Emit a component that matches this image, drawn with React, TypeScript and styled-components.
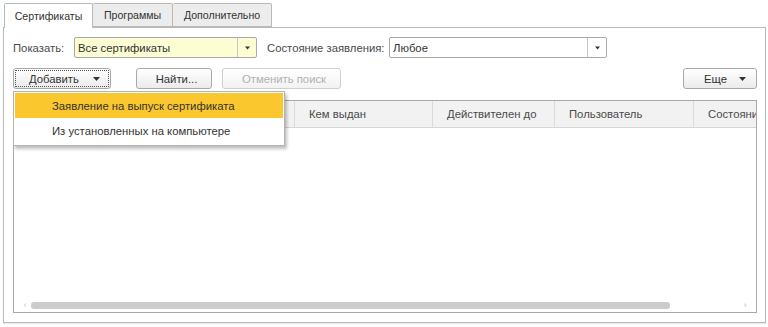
import React from 'react';
import styled, { createGlobalStyle } from 'styled-components';

const GlobalStyle = createGlobalStyle`
  html, body {
    margin: 0;
    padding: 0;
    background: #ffffff;
  }
  body {
    font-family: "Liberation Sans", Arial, sans-serif;
    font-size: 11.3px;
    color: #333333;
  }
`;

const tabs = [
  { title: 'Сертификаты', width: 89 },
  { title: 'Программы', width: 80 },
  { title: 'Дополнительно', width: 99 },
];

const columns = [
  { title: '', width: 281 },
  { title: 'Кем выдан', width: 138 },
  { title: 'Действителен до', width: 122 },
  { title: 'Пользователь', width: 139 },
  { title: 'Состояни', width: 62 },
];

const menuItems = ['Заявление на выпуск сертификата', 'Из установленных на компьютере'];

const Arrow = ({ size = 7 }: { size?: number }) => (
  <svg width={size} height={4} viewBox="0 0 7 4">
    <path d="M0 0 H7 L3.5 4 Z" fill="#333333" />
  </svg>
);

const App: React.FC = () => {
  return (
    <>
      <GlobalStyle />
      <Page>
        <TabBar>
          {tabs.map((t, i) => (
            <Tab key={t.title} $width={t.width} $active={i === 0}>
              {t.title}
            </Tab>
          ))}
        </TabBar>
        <Panel>
          <FilterRow>
            <Label $width={61}>Показать:</Label>
            <Combo $width={183} $yellow>
              <ComboText>Все сертификаты</ComboText>
              <ComboButton>
                <Arrow size={5} />
              </ComboButton>
            </Combo>
            <Label $width={122} $gap={10}>Состояние заявления:</Label>
            <Combo $width={218}>
              <ComboText>Любое</ComboText>
              <ComboButton>
                <Arrow size={5} />
              </ComboButton>
            </Combo>
          </FilterRow>

          <CommandBar>
            <AddWrap>
              <Button $width={98} $focused>
                <span>Добавить</span>
                <Arrow />
              </Button>
              <Menu>
                {menuItems.map((m, i) => (
                  <MenuItem key={m} $selected={i === 0}>
                    {m}
                  </MenuItem>
                ))}
              </Menu>
            </AddWrap>
            <Button $width={76} $ml={25}>
              Найти...
            </Button>
            <Button $width={119} $ml={10} disabled>
              Отменить поиск
            </Button>
            <Spacer />
            <Button $width={74} $split>
              <span>Еще</span>
              <Arrow />
            </Button>
          </CommandBar>

          <Table>
            <Header>
              {columns.map((c, i) => (
                <HeaderCell key={i} $width={c.width}>
                  {c.title}
                </HeaderCell>
              ))}
            </Header>
            <Body />
            <ScrollBar>
              <ScrollArrow>‹</ScrollArrow>
              <Track>
                <Thumb style={{ width: '90%' }} />
              </Track>
              <ScrollArrow>›</ScrollArrow>
            </ScrollBar>
          </Table>
        </Panel>
      </Page>
    </>
  );
};

const Page = styled.div`
  width: 768px;
  height: 327px;
  box-sizing: border-box;
  padding: 3px 2px 4px 3px;
  display: flex;
  flex-direction: column;
`;

const TabBar = styled.div`
  display: flex;
  padding-left: 1px;
  height: 24px;
  position: relative;
  z-index: 1;
`;

const Tab = styled.div<{ $width: number; $active?: boolean }>`
  box-sizing: border-box;
  width: ${(p) => p.$width}px;
  height: ${(p) => (p.$active ? '25px' : '24px')};
  display: flex;
  align-items: center;
  justify-content: center;
  white-space: nowrap;
  font-size: 10.6px;
  border: 1px solid #b9b9b9;
  border-bottom: ${(p) => (p.$active ? 'none' : '1px solid #b9b9b9')};
  border-left: ${(p) => (p.$active ? '1px solid #b9b9b9' : 'none')};
  background: ${(p) => (p.$active ? '#ffffff' : '#ececec')};
  color: #333333;
  border-radius: 2px 2px 0 0;
`;

const Panel = styled.div`
  flex: 1;
  box-sizing: border-box;
  border: 1px solid #b9b9b9;
  box-shadow: 0 1px 1px rgba(0, 0, 0, 0.08);
  padding: 9px 8px 9px 9px;
  display: flex;
  flex-direction: column;
`;

const FilterRow = styled.div`
  display: flex;
  align-items: center;
  height: 21px;
`;

const Label = styled.span<{ $width: number; $gap?: number }>`
  flex: 0 0 ${(p) => p.$width}px;
  color: #4a4a4a;
  margin-left: ${(p) => p.$gap ?? 0}px;
  white-space: nowrap;
`;

const Combo = styled.div<{ $width: number; $yellow?: boolean }>`
  box-sizing: border-box;
  width: ${(p) => p.$width}px;
  height: 21px;
  display: flex;
  border: 1px solid #a9a9a9;
  border-radius: 2px;
  background: ${(p) => (p.$yellow ? '#fdfdd3' : '#ffffff')};
`;

const ComboText = styled.div`
  flex: 1;
  display: flex;
  align-items: center;
  padding-left: 3px;
  color: #333333;
`;

const ComboButton = styled.div`
  width: 18px;
  border-left: 1px solid #c8c8c8;
  display: flex;
  align-items: center;
  justify-content: center;
`;

const CommandBar = styled.div`
  display: flex;
  align-items: center;
  margin-top: 10px;
  height: 21px;
`;

const AddWrap = styled.div`
  position: relative;
`;

const Button = styled.button<{ $width: number; $ml?: number; $focused?: boolean; $split?: boolean }>`
  box-sizing: border-box;
  width: ${(p) => p.$width}px;
  height: 21px;
  margin-left: ${(p) => p.$ml ?? 0}px;
  padding: 0 10px 0 ${(p) => (p.$split ? 20 : 15)}px;
  display: flex;
  align-items: center;
  justify-content: ${(p) => (p.$focused || p.$split ? 'space-between' : 'center')};
  font-family: "Liberation Sans", Arial, sans-serif;
  font-size: 11.3px;
  color: #333333;
  background: linear-gradient(#ffffff, #ebebeb);
  border: 1px solid #a9a9a9;
  border-radius: 3px;
  ${(p) => (p.$focused ? 'outline: 1px dotted #555555; outline-offset: -3px;' : '')}

  &:disabled {
    color: #b0b0b0;
    border-color: #cfcfcf;
    background: linear-gradient(#ffffff, #f2f2f2);
    justify-content: center;
  }
`;

const Spacer = styled.div`
  flex: 1;
`;

const Menu = styled.div`
  position: absolute;
  left: 0;
  top: 23px;
  z-index: 5;
  width: 272px;
  box-sizing: border-box;
  background: #ffffff;
  border: 1px solid #b3b3b3;
  box-shadow: 2px 3px 3px rgba(0, 0, 0, 0.25);
  padding: 1px 1px 2px 1px;
`;

const MenuItem = styled.div<{ $selected?: boolean }>`
  height: 25px;
  display: flex;
  align-items: center;
  padding-left: 37px;
  white-space: nowrap;
  color: #333333;
  background: ${(p) => (p.$selected ? '#fbc72f' : 'transparent')};
`;

const Table = styled.div`
  margin-top: 11px;
  flex: 1;
  box-sizing: border-box;
  border: 1px solid #a9a9a9;
  display: flex;
  flex-direction: column;
  overflow: hidden;
`;

const Header = styled.div`
  display: flex;
  height: 26px;
  background: #f2f2f2;
  border-bottom: 1px solid #d6d6d6;
  overflow: hidden;
`;

const HeaderCell = styled.div<{ $width: number }>`
  flex: 0 0 ${(p) => p.$width}px;
  box-sizing: border-box;
  padding-left: 14px;
  display: flex;
  align-items: center;
  border-right: 1px solid #dadada;
  color: #4a4a4a;
  white-space: nowrap;
  overflow: hidden;

  &:last-child {
    border-right: none;
  }
`;

const Body = styled.div`
  flex: 1;
`;

const ScrollBar = styled.div`
  height: 9px;
  margin-bottom: 2px;
  display: flex;
  align-items: center;
  padding: 0 6px;
`;

const ScrollArrow = styled.span`
  width: 10px;
  font-size: 9px;
  color: #c4c4c4;
  text-align: center;
  line-height: 9px;
`;

const Track = styled.div`
  flex: 1;
  height: 7px;
  display: flex;
`;

const Thumb = styled.div`
  height: 7px;
  background: #cccccc;
  border-radius: 3px;
  margin-left: 1px;
`;

export default App;
